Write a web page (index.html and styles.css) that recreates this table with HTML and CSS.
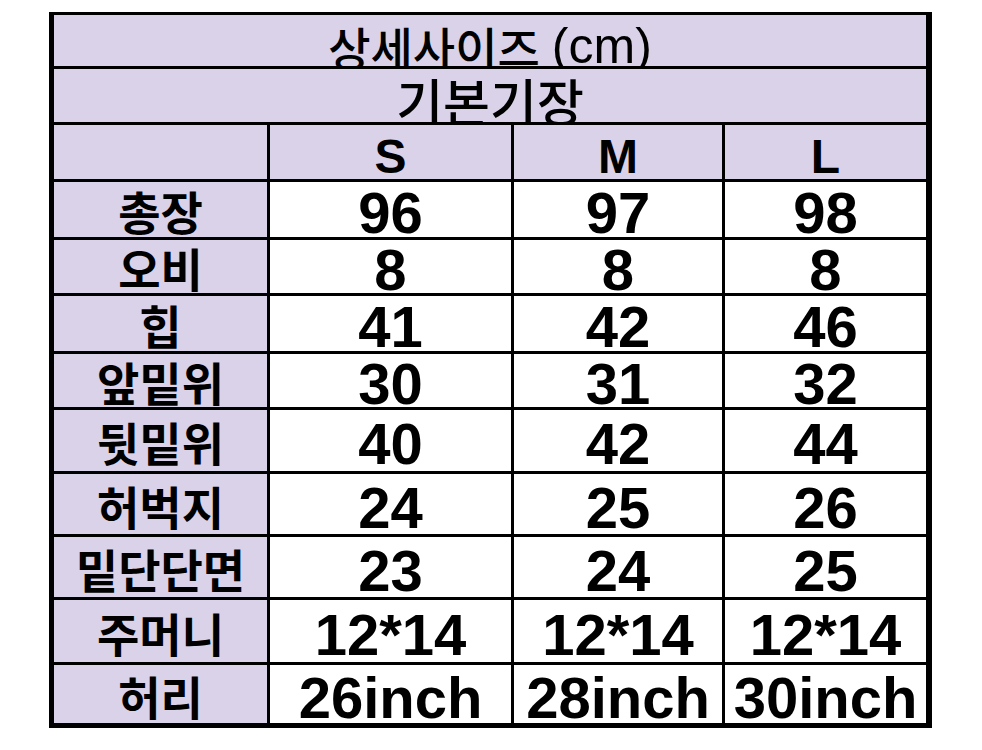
FILE: index.html
```html
<!DOCTYPE html>
<html lang="ko">
<head>
<meta charset="utf-8">
<title>상세사이즈</title>
<link rel="stylesheet" href="styles.css">
</head>
<body>
<div class="page">
  <div class="sheet">
    <div class="cell head span title">상세사이즈 <span class="unit">(cm)</span></div>
    <div class="cell head span sub">기본기장</div>
    <div class="cell head"></div>
    <div class="cell head size">S</div>
    <div class="cell head size">M</div>
    <div class="cell head size">L</div>

    <div class="cell label">총장</div><div class="cell val">96</div><div class="cell val">97</div><div class="cell val">98</div>
    <div class="cell label">오비</div><div class="cell val">8</div><div class="cell val">8</div><div class="cell val">8</div>
    <div class="cell label">힙</div><div class="cell val">41</div><div class="cell val">42</div><div class="cell val">46</div>
    <div class="cell label">앞밑위</div><div class="cell val">30</div><div class="cell val">31</div><div class="cell val">32</div>
    <div class="cell label">뒷밑위</div><div class="cell val">40</div><div class="cell val">42</div><div class="cell val">44</div>
    <div class="cell label">허벅지</div><div class="cell val">24</div><div class="cell val">25</div><div class="cell val">26</div>
    <div class="cell label">밑단단면</div><div class="cell val">23</div><div class="cell val">24</div><div class="cell val">25</div>
    <div class="cell label">주머니</div><div class="cell val">12*14</div><div class="cell val">12*14</div><div class="cell val">12*14</div>
    <div class="cell label">허리</div><div class="cell val">26inch</div><div class="cell val">28inch</div><div class="cell val">30inch</div>
  </div>
</div>
</body>
</html>
```
FILE: styles.css
```css
html, body {
  margin: 0;
  padding: 0;
  background: #ffffff;
}

.page {
  width: 982px;
  height: 750px;
  padding: 12px 0 0 49px;
  box-sizing: border-box;
}

.sheet {
  display: grid;
  width: 883px;
  box-sizing: border-box;
  background: #000000;
  padding: 3px 6px 5px 5px;
  gap: 3px;
  grid-template-columns: 213px 241px 208px 201px;
  grid-template-rows: 51px 53px 54px 55px 53px 55px 53px 61px 60px 60px 62px 58px;
}

.cell {
  display: flex;
  align-items: center;
  justify-content: center;
  background: #ffffff;
  color: #000000;
  white-space: nowrap;
  line-height: 0.8;
  overflow: visible;
  box-sizing: border-box;
  font-family: "Liberation Sans", "Noto Sans CJK KR", sans-serif;
}

.head,
.label {
  background: #d9d2e9;
}

.span {
  grid-column: 1 / -1;
}

.title {
  font-family: "Noto Sans CJK KR", sans-serif;
  font-size: 46px;
  font-weight: 500;
  padding-top: 11px;
}

.title .unit {
  font-family: "Liberation Sans", sans-serif;
  font-size: 50px;
  margin-left: 12px;
}

.sub {
  font-family: "Noto Sans CJK KR", sans-serif;
  font-size: 51px;
  font-weight: 500;
  padding-top: 9px;
}

.size {
  font-size: 48px;
  font-weight: 700;
  padding-top: 10px;
}

.label {
  font-family: "Noto Sans CJK KR", sans-serif;
  font-size: 46px;
  font-weight: 700;
  padding-top: 2px;
}

.val {
  font-size: 58px;
  font-weight: 700;
  padding-top: 8px;
}
```
